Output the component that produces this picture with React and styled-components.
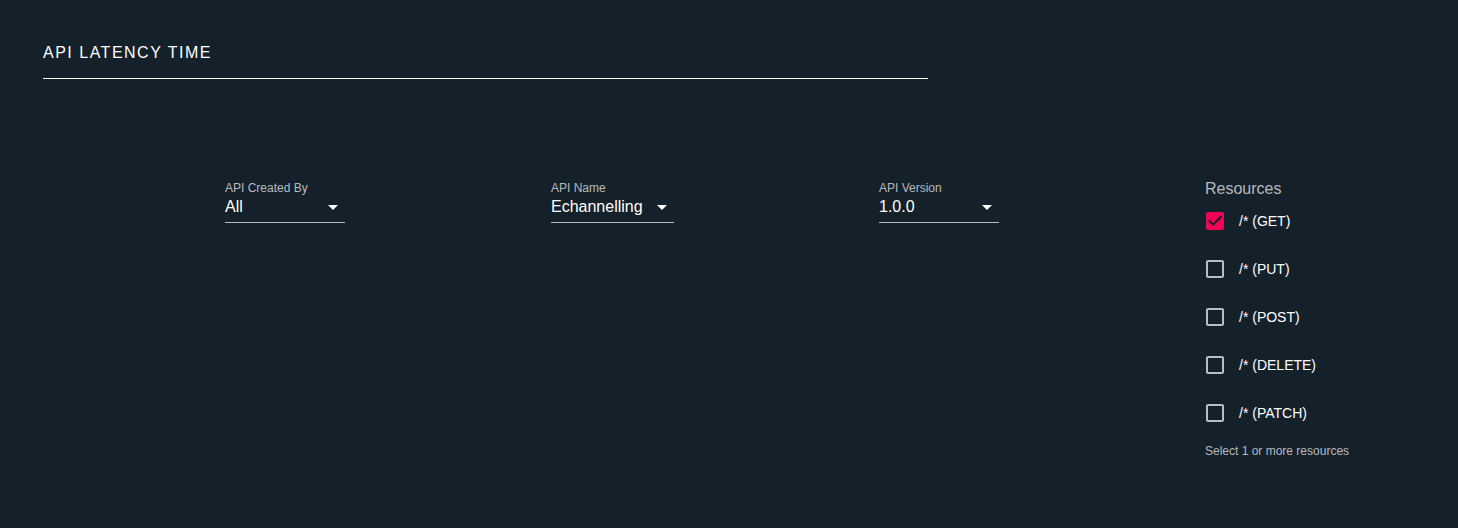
import React, { useState } from 'react'
import styled, { createGlobalStyle } from 'styled-components'

const GlobalStyle = createGlobalStyle`
  body {
    margin: 0;
    background-color: #14202a;
    font-family: "Liberation Sans", Arial, sans-serif;
    color: #ffffff;
  }
`

const Page = styled.div`
  padding: 42px 43px 0;
  min-height: 486px;
`

const Header = styled.div`
  width: 885px;
  border-bottom: 1px solid #ffffff;
  padding-bottom: 14px;
`

const Title = styled.h2`
  margin: 0;
  font-size: 16px;
  font-weight: 400;
  line-height: 22px;
  letter-spacing: 1.5px;
  color: #ffffff;
`

const Filters = styled.div`
  display: grid;
  grid-template-columns: 326px 328px 326px auto;
  padding-left: 182px;
  margin-top: 102px;
  align-items: start;
`

const Field = styled.div`
  display: inline-flex;
  flex-direction: column;
  justify-self: start;
`

const FieldLabel = styled.label`
  font-size: 12px;
  line-height: 14px;
  color: rgba(255, 255, 255, 0.7);
`

const SelectBox = styled.div`
  position: relative;
  min-width: 120px;
  box-sizing: border-box;
  margin-top: 2px;
  padding: 0 31px 6px 0;
  border-bottom: 1px solid rgba(255, 255, 255, 0.7);
  font-size: 16px;
  line-height: 19px;
  color: #ffffff;
  cursor: pointer;
`

const Arrow = styled.svg`
  position: absolute;
  right: 0;
  top: -2px;
  width: 24px;
  height: 24px;
  fill: #ffffff;
`

const Resources = styled.div`
  display: flex;
  flex-direction: column;
  margin-top: -2px;
`

const ResourcesLabel = styled.div`
  font-size: 16px;
  line-height: 19px;
  color: rgba(255, 255, 255, 0.7);
  margin-bottom: -1px;
`

const CheckRow = styled.label`
  display: flex;
  align-items: center;
  height: 48px;
  margin-left: -2px;
  cursor: pointer;
`

const CheckIcon = styled.svg`
  width: 24px;
  height: 24px;
  fill: ${p => (p.$checked ? '#f50057' : 'rgba(255, 255, 255, 0.7)')};
  margin-right: 12px;
`

const CheckText = styled.span`
  font-size: 14px;
  color: #ffffff;
`

const Helper = styled.div`
  font-size: 12px;
  line-height: 14px;
  color: rgba(255, 255, 255, 0.7);
  margin-top: 7px;
`

function Select({ label, value }) {
  return (
    <Field>
      <FieldLabel>{label}</FieldLabel>
      <SelectBox>
        {value}
        <Arrow viewBox="0 0 24 24">
          <path d="M7 10l5 5 5-5z" />
        </Arrow>
      </SelectBox>
    </Field>
  )
}

const boxPath =
  'M19 5v14H5V5h14m0-2H5c-1.11 0-2 .9-2 2v14c0 1.1.89 2 2 2h14c1.1 0 2-.9 2-2V5c0-1.1-.9-2-2-2z'
const checkedPath =
  'M19 3H5c-1.11 0-2 .9-2 2v14c0 1.1.89 2 2 2h14c1.11 0 2-.9 2-2V5c0-1.1-.89-2-2-2zm-9 14l-5-5 1.41-1.41L10 14.17l7.59-7.59L19 8l-9 9z'

export default function App() {
  const [checked, setChecked] = useState(['GET'])
  const methods = ['GET', 'PUT', 'POST', 'DELETE', 'PATCH']

  function toggle(m) {
    if (checked.includes(m)) {
      setChecked(checked.filter(c => c !== m))
    } else {
      setChecked([...checked, m])
    }
  }

  return (
    <>
      <GlobalStyle />
      <Page>
        <Header>
          <Title>API LATENCY TIME</Title>
        </Header>
        <Filters>
          <Select label="API Created By" value="All" />
          <Select label="API Name" value="Echannelling" />
          <Select label="API Version" value="1.0.0" />
          <Resources>
            <ResourcesLabel>Resources</ResourcesLabel>
            {methods.map(m => (
              <CheckRow key={m} onClick={() => toggle(m)}>
                <CheckIcon viewBox="0 0 24 24" $checked={checked.includes(m)}>
                  <path d={checked.includes(m) ? checkedPath : boxPath} />
                </CheckIcon>
                <CheckText>/* ({m})</CheckText>
              </CheckRow>
            ))}
            <Helper>Select 1 or more resources</Helper>
          </Resources>
        </Filters>
      </Page>
    </>
  )
}
